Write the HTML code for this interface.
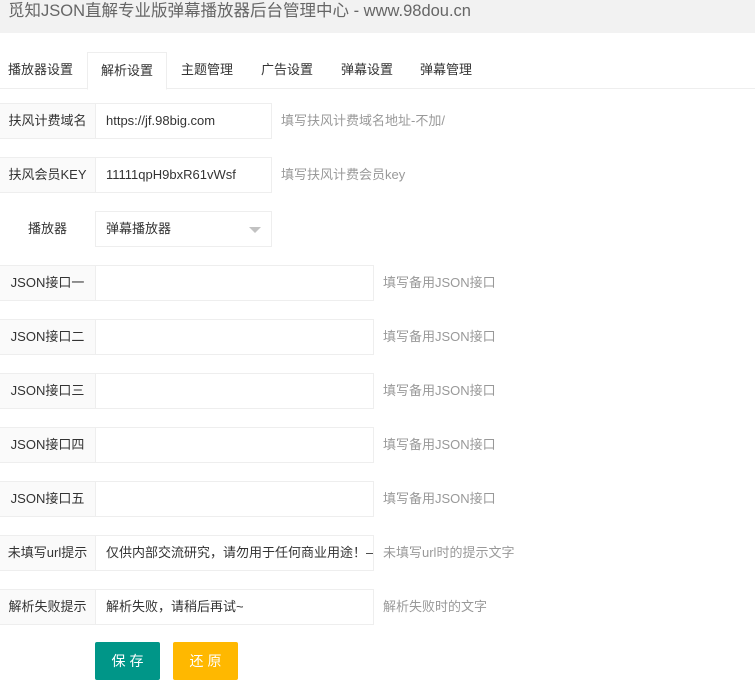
<!DOCTYPE html><html><head><meta charset="utf-8"><style>
*{margin:0;padding:0;box-sizing:border-box}
body{width:755px;height:672px;overflow:hidden;background:#fff;font-family:"Liberation Sans","Noto Sans CJK SC",sans-serif;font-size:13px;color:#333}
.hd{height:33px;background:#f2f2f2;color:#666;font-size:16.5px;line-height:22px;padding-left:8px}
.tabs{position:absolute;top:52px;left:0;width:755px;height:37px;border-bottom:1px solid #eee}
.tab{position:absolute;top:0;height:37px;line-height:36px;font-size:13px;color:#333}
.tab.act{background:#fff;border:1px solid #eee;border-bottom-color:#fff;height:38px;width:80px;left:87px;text-align:center;line-height:35px}
.row{position:absolute;left:0;height:36px}
.lb{position:absolute;left:0;top:0;width:96px;height:36px;background:#fafafa;border:1px solid #eee;border-left:none;line-height:34px;text-align:center;font-size:13px}
.in{position:absolute;left:95px;top:0;height:36px;border:1px solid #eee;line-height:34px;padding-left:10px;font-size:13px;white-space:nowrap;overflow:hidden}
.tip{position:absolute;top:0;line-height:36px;color:#999;font-size:13px;white-space:nowrap}
.btn{position:absolute;top:642px;height:38px;width:65px;color:#fff;text-align:center;line-height:38px;font-size:14px;letter-spacing:4px;padding-left:4px;border-radius:2px}
</style></head><body>
<div class="hd">觅知JSON直解专业版弹幕播放器后台管理中心 - www.98dou.cn</div>
<div class="tabs">
<div class="tab" style="left:8px">播放器设置</div>
<div class="tab act">解析设置</div>
<div class="tab" style="left:181px">主题管理</div>
<div class="tab" style="left:261px">广告设置</div>
<div class="tab" style="left:341px">弹幕设置</div>
<div class="tab" style="left:420px">弹幕管理</div>
</div>
<div class="row" style="top:103px"><div class="lb">扶风计费域名</div><div class="in" style="width:177px">https://jf.98big.com</div><div class="tip" style="left:281px">填写扶风计费域名地址-不加/</div></div>
<div class="row" style="top:157px"><div class="lb">扶风会员KEY</div><div class="in" style="width:177px">11111qpH9bxR61vWsf</div><div class="tip" style="left:281px">填写扶风计费会员key</div></div>
<div class="row" style="top:211px"><div class="lb" style="background:#fff;border-color:#fff">播放器</div><div class="in" style="width:177px">弹幕播放器<span style="position:absolute;right:10px;top:15px;border:6px solid transparent;border-top:6px solid #c2c2c2;border-bottom:none"></span></div></div>
<div class="row" style="top:265px"><div class="lb">JSON接口一</div><div class="in" style="width:279px"></div><div class="tip" style="left:383px">填写备用JSON接口</div></div>
<div class="row" style="top:319px"><div class="lb">JSON接口二</div><div class="in" style="width:279px"></div><div class="tip" style="left:383px">填写备用JSON接口</div></div>
<div class="row" style="top:373px"><div class="lb">JSON接口三</div><div class="in" style="width:279px"></div><div class="tip" style="left:383px">填写备用JSON接口</div></div>
<div class="row" style="top:427px"><div class="lb">JSON接口四</div><div class="in" style="width:279px"></div><div class="tip" style="left:383px">填写备用JSON接口</div></div>
<div class="row" style="top:481px"><div class="lb">JSON接口五</div><div class="in" style="width:279px"></div><div class="tip" style="left:383px">填写备用JSON接口</div></div>
<div class="row" style="top:535px"><div class="lb">未填写url提示</div><div class="in" style="width:279px">仅供内部交流研究，请勿用于任何商业用途！—</div><div class="tip" style="left:383px">未填写url时的提示文字</div></div>
<div class="row" style="top:589px"><div class="lb">解析失败提示</div><div class="in" style="width:279px">解析失败，请稍后再试~</div><div class="tip" style="left:383px">解析失败时的文字</div></div>
<div class="btn" style="left:95px;background:#009688">保存</div>
<div class="btn" style="left:173px;background:#ffb800">还原</div>
</body></html>
